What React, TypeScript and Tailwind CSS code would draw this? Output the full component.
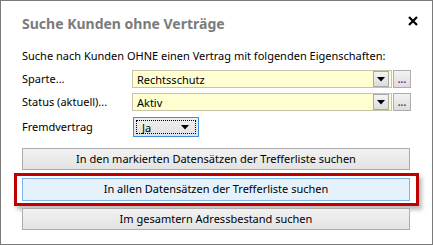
import React from "react";

const font = { fontFamily: '"Noto Sans", "Open Sans", sans-serif' };

function Arrow() {
  return (
    <svg width="8" height="5" viewBox="0 0 8 5">
      <path d="M0 0 L8 0 L4 4.5 Z" fill="#000" />
    </svg>
  );
}

function Combo({ text }: { text: string }) {
  return (
    <div className="flex items-center gap-[1px]">
      <div className="flex h-[18px] w-[260px] items-center border border-[#c6c3a6] bg-[#ffffd2] pl-[4px] pr-[2px]">
        <span className="flex-1 text-[11px] leading-none text-black">{text}</span>
        <div className="flex h-[16px] w-[16px] items-center justify-center border border-[#a9a9a9] bg-gradient-to-b from-[#f4f4f4] to-[#dcdcdc]">
          <Arrow />
        </div>
      </div>
      <div className="flex h-[18px] w-[18px] items-end justify-center border border-[#adadad] bg-gradient-to-b from-[#f2f2f2] to-[#dddddd] pb-[3px]">
        <span className="text-[10px] leading-none font-bold text-[#7a1a7a]">...</span>
      </div>
    </div>
  );
}

function Btn({ text, active }: { text: string; active?: boolean }) {
  return (
    <div
      className={
        active
          ? "flex h-[23px] w-[388px] items-center justify-center border border-[#7eb4ea] bg-[#e5f1fb] text-[11px] text-black"
          : "flex h-[22px] w-[388px] items-center justify-center border border-[#acacac] bg-gradient-to-b from-[#f2f2f2] to-[#e3e3e3] text-[11px] text-black"
      }
    >
      {text}
    </div>
  );
}

export default function App() {
  return (
    <div style={font} className="relative h-[245px] w-[433px] border border-[#7a7a7a] bg-white">
      <div className="flex items-start justify-between pl-[21px] pr-[14px] pt-[12px]">
        <h1 className="text-[14px] font-bold leading-[22px] text-[#7b7b7b]">Suche Kunden ohne Verträge</h1>
        <svg width="10" height="10" viewBox="0 0 10 10" className="mt-[3px]">
          <path d="M1 1 L9 9 M9 1 L1 9" stroke="#000" strokeWidth="2.2" />
        </svg>
      </div>
      <div className="pl-[21px] pt-[13px]">
        <p className="text-[11px] leading-[16px] text-black">
          Suche nach Kunden OHNE einen Vertrag mit folgenden Eigenschaften:
        </p>
        <div className="mt-[6px] flex h-[18px] items-center">
          <span className="w-[110px] text-[11px] leading-[18px] text-black">Sparte...</span>
          <Combo text="Rechtsschutz" />
        </div>
        <div className="mt-[5px] flex h-[18px] items-center">
          <span className="w-[110px] text-[11px] leading-[18px] text-black">Status (aktuell)...</span>
          <Combo text="Aktiv" />
        </div>
        <div className="mt-[6px] flex h-[20px] items-center">
          <span className="w-[111px] text-[11px] leading-[18px] text-black">Fremdvertrag</span>
          <div className="flex h-[20px] w-[66px] items-center border border-[#3c8fe0] bg-gradient-to-b from-[#efefef] to-[#e2e2e2] p-[2px]">
            <div className="flex h-full w-full items-center border border-dotted border-black pl-[5px] pr-[6px]">
              <span className="flex-1 text-[11px] leading-none text-black">Ja</span>
              <Arrow />
            </div>
          </div>
        </div>
        <div className="mt-[11px] flex flex-col">
          <Btn text="In den markierten Datensätzen der Trefferliste suchen" />
          <div className="ml-[-8px] mt-[3px] w-[405px] border-[3px] border-[#c00000] py-[2px] pl-[5px] shadow-[3px_4px_4px_rgba(0,0,0,0.25)]">
            <Btn text="In allen Datensätzen der Trefferliste suchen" active />
          </div>
          <div className="mt-[2px]">
            <Btn text="Im gesamtern Adressbestand suchen" />
          </div>
        </div>
      </div>
    </div>
  );
}
